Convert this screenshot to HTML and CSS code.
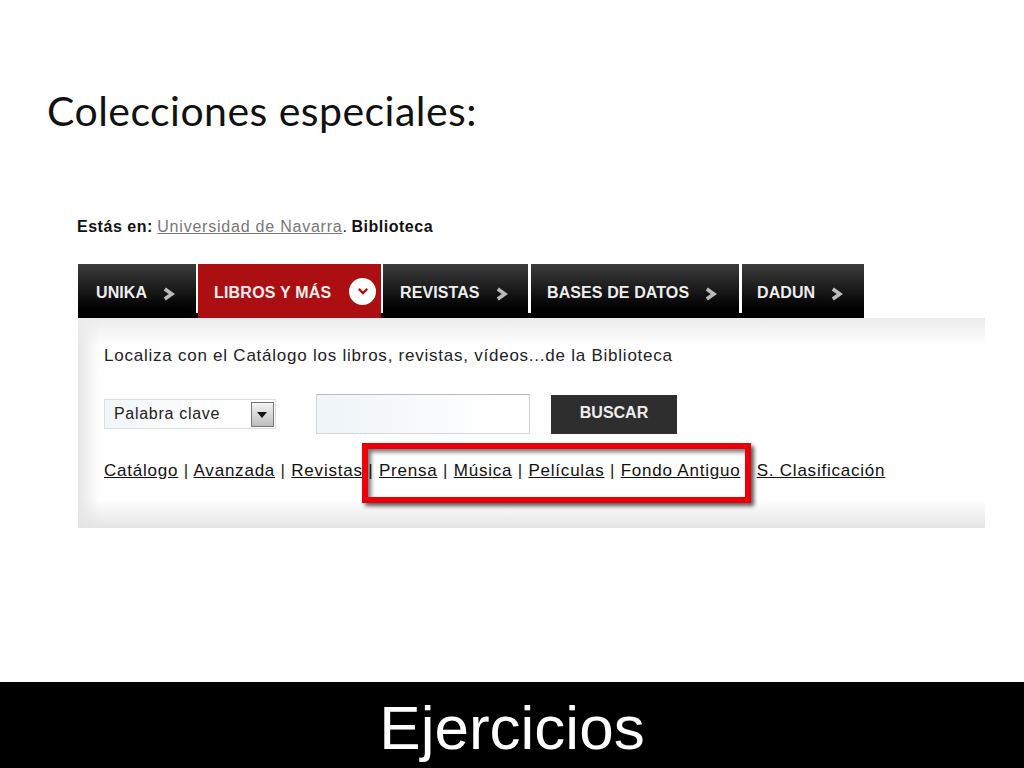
FILE: index.html
```html
<!DOCTYPE html>
<html lang="es">
<head>
<meta charset="utf-8">
<title>Colecciones especiales</title>
<link rel="stylesheet" href="styles.css">
</head>
<body>
<main class="slide">
  <section class="content">
    <h1 class="title">Colecciones especiales:</h1>
    <div class="shot">
      <p class="crumb"><b>Estás en:</b> <a href="#">Universidad de Navarra</a>. <b>Biblioteca</b></p>
      <nav class="tabs">
        <a class="tab tab-unika" href="#"><span>UNIKA</span><svg class="chev" viewBox="0 0 10 10"><path d="M2 1.5 7 5 2 8.500"/></svg></a>
        <a class="tab tab-libros" href="#"><span>LIBROS Y MÁS</span><i class="circle"><svg viewBox="0 0 10 10"><path d="M2 3.500 5 6.500 8 3.500"/></svg></i></a>
        <a class="tab tab-revistas" href="#"><span>REVISTAS</span><svg class="chev" viewBox="0 0 10 10"><path d="M2 1.5 7 5 2 8.500"/></svg></a>
        <a class="tab tab-bases" href="#"><span>BASES DE DATOS</span><svg class="chev" viewBox="0 0 10 10"><path d="M2 1.5 7 5 2 8.500"/></svg></a>
        <a class="tab tab-dadun" href="#"><span>DADUN</span><svg class="chev" viewBox="0 0 10 10"><path d="M2 1.5 7 5 2 8.500"/></svg></a>
      </nav>
      <div class="panel">
        <p class="intro">Localiza con el Catálogo los libros, revistas, vídeos...de la Biblioteca</p>
        <div class="form">
          <div class="select"><span>Palabra clave</span><i class="drop"></i></div>
          <div class="input"></div>
          <div class="btn">BUSCAR</div>
        </div>
        <p class="links"><a href="#">Catálogo</a> | <a href="#">Avanzada</a> | <a href="#">Revistas</a> | <a href="#">Prensa</a> | <a href="#">Música</a> | <a href="#">Películas</a> | <a href="#">Fondo Antiguo</a> | <a href="#">S. Clasificación</a></p>
        <div class="mark"></div>
      </div>
    </div>
  </section>
  <footer class="foot">Ejercicios</footer>
</main>
</body>
</html>
```
FILE: styles.css
```css
html, body { margin: 0; padding: 0; background: #fff; }
.slide { width: 1024px; height: 768px; display: flex; flex-direction: column; overflow: hidden; }
.content { flex: 1; display: flex; flex-direction: column; padding: 85px 0 0 47px; }
.title { margin: 0; font: 400 41px/52px Lato, "Open Sans", sans-serif; color: #111; letter-spacing: .46px; }
.shot { margin: 80px 0 0 31px; width: 907px; font-family: "Liberation Sans", Arial, sans-serif; }
.crumb { margin: 0 0 0 -1px; font-size: 16px; line-height: 20px; color: #111; }
.crumb b { letter-spacing: .52px; }
.crumb a { color: #777; letter-spacing: .78px; }
.tabs { display: flex; width: max-content; margin-top: 27px; height: 54px; background: linear-gradient(transparent 49px, #000 49px); }
.tab { display: flex; align-items: center; height: 54px; box-sizing: border-box; padding-top: 4px; color: #eee; text-decoration: none; font-weight: 700; font-size: 16px; background: linear-gradient(#3c3c3c, #000 85%); border-bottom: 1px solid #000; }
.tab span { white-space: nowrap; letter-spacing: .1px; }
.tab-unika { width: 118px; padding-left: 18px; margin-right: 2px; }
.tab-libros { width: 183px; padding-top: 3px; padding-left: 16px; margin-right: 2px; background: #ac0f12; border: 0; }
.tab-libros span { letter-spacing: .2px; }
.tab-revistas { width: 145px; padding-left: 17px; margin-right: 3px; }
.tab-bases { width: 208px; padding-left: 16px; margin-right: 3px; }
.tab-dadun { width: 122px; padding-left: 15px; }
.chev { width: 14px; height: 14px; margin: 2px 0 0 15px; fill: none; stroke: #bbb; stroke-width: 2.6; }
.circle { width: 27px; height: 27px; margin-left: 18px; margin-top: -3px; border-radius: 50%; background: #fff; display: flex; align-items: center; justify-content: center; }
.circle svg { width: 14px; height: 14px; fill: none; stroke: #ac0f12; stroke-width: 1.6; }
.panel { position: relative; height: 210px; box-sizing: border-box; padding: 26px 0 0 26px; background:
  linear-gradient(#ececec, rgba(255,255,255,0) 28px),
  linear-gradient(0deg, #e4e4e4, rgba(255,255,255,0) 28px),
  linear-gradient(90deg, #e6e6e6, rgba(255,255,255,0) 22px), #fff; }
.intro { margin: 0; font-size: 17px; line-height: 24px; color: #222; letter-spacing: .76px; white-space: nowrap; }
.form { display: flex; align-items: center; margin-top: 26px; height: 40px; }
.select { width: 172px; height: 30px; box-sizing: border-box; display: flex; align-items: center; justify-content: space-between; padding: 0 1px 0 9px; background: linear-gradient(90deg, #f1f5f8, #fff 60%); border: 1px solid #ddd; font-size: 16px; color: #222; letter-spacing: .7px; }
.drop { position: relative; width: 23px; height: 25px; box-sizing: border-box; border: 1px solid #777; background: linear-gradient(#f4f4f4, #bdbdbd); display: block; }
.drop::after { content: ""; position: absolute; left: 5px; top: 9px; border: 5px solid transparent; border-top: 6px solid #111; border-bottom: 0; }
.input { width: 214px; height: 40px; margin-left: 40px; box-sizing: border-box; border: 1px solid #d5d5d5; border-top-color: #bbb; background: linear-gradient(90deg, #eef4f8, #fff 85%); }
.btn { width: 126px; height: 39px; margin-left: 21px; background: #2e2e2e; color: #eee; font-weight: 700; font-size: 16px; display: flex; align-items: center; justify-content: center; padding-bottom: 2px; box-sizing: border-box; }
.links { margin: 25px 0 0; font-size: 17px; line-height: 24px; color: #222; letter-spacing: .78px; white-space: nowrap; }
.links a { color: #111; }
.mark { position: absolute; left: 284px; top: 125px; width: 389px; height: 60px; box-sizing: border-box; border: 6px solid #ea0008; box-shadow: 3px 3px 4px rgba(0,0,0,.65), inset 3px 3px 4px rgba(0,0,0,.55); }
.foot { height: 86px; background: #000; color: #fff; text-align: center; font: 400 62px/92px "Liberation Sans", Arial, sans-serif; }
```
